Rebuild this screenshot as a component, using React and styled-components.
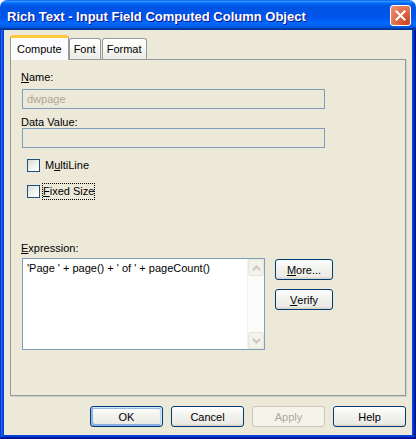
import React from 'react';
import styled, { createGlobalStyle, css } from 'styled-components';

const GlobalStyle = createGlobalStyle`
  html, body {
    margin: 0;
    padding: 0;
    background: #ffffff;
    overflow: hidden;
  }
  body {
    font-family: "Liberation Sans", Arial, sans-serif;
    font-size: 11px;
    color: #000;
  }
`;

// Window chrome
const Window = styled.div`
  width: 416px;
  height: 439px;
  display: flex;
  flex-direction: column;
`;

const TitleBar = styled.div`
  height: 30px;
  flex-shrink: 0;
  display: flex;
  align-items: flex-start;
  justify-content: space-between;
  padding: 0 5px 0 7px;
  box-sizing: border-box;
  border-radius: 7px 7px 0 0;
  background: linear-gradient(
    180deg,
    #0058ee 0%,
    #3593ff 4%,
    #288eff 6%,
    #127dff 8%,
    #036ffc 10%,
    #0262ee 14%,
    #0057e5 20%,
    #0054e3 24%,
    #0055eb 56%,
    #005bf5 66%,
    #026afe 76%,
    #0062ef 86%,
    #0052d6 92%,
    #0040ab 94%,
    #003092 100%
  );
`;

const Title = styled.div`
  padding-top: 9px;
  font-family: "Liberation Sans", Arial, sans-serif;
  font-weight: bold;
  font-size: 13px;
  line-height: 16px;
  color: #fff;
  text-shadow: 1px 1px #0f1089;
  white-space: nowrap;
`;

const CloseButton = styled.div`
  margin-top: 5px;
  width: 21px;
  height: 21px;
  box-sizing: border-box;
  border: 1px solid #fff;
  border-radius: 3px;
  background: radial-gradient(circle at 85% 85%, #cc4622 0%, #dc5a36 30%, #e37452 60%, #ee9478 100%);
  display: flex;
  align-items: center;
  justify-content: center;
`;

const Frame = styled.div`
  flex: 1;
  display: flex;
  padding: 0 4px 4px 4px;
  background: #0842d6;
  box-shadow: inset -1px -1px #00138c, inset 1px 0 #0831d9, inset -2px -2px #001ea0,
    inset 2px 0 #166aee, inset -3px -3px #003bda, inset 3px 0 #0855dd;
`;

const Client = styled.div`
  flex: 1;
  display: flex;
  flex-direction: column;
  padding: 6px 6px 0 6px;
  background: #ece9d8;
`;

// Tabs
const TabStrip = styled.div`
  display: flex;
  align-items: flex-end;
  height: 24px;
  position: relative;
  z-index: 1;
  margin-bottom: -1px;
`;

const Tab = styled.div`
  box-sizing: border-box;
  border: 1px solid #919b9c;
  border-bottom: none;
  border-radius: 3px 3px 0 0;
  line-height: 18px;
  white-space: nowrap;
  ${(p) =>
    p.$active
      ? css`
          height: 25px;
          padding: 2px 6px 0 6px;
          background: #fcfcfe;
          border-top: 3px solid #ffc83c;
          box-shadow: inset 0 -0px #fff;
        `
      : css`
          height: 21px;
          padding: 1px 4px 0 4px;
          margin-bottom: 1px;
          margin-left: ${p.$gap || 0}px;
          background: linear-gradient(180deg, #ffffff 0%, #f6f6f2 50%, #ecebe5 100%);
        `}
`;

const Panel = styled.div`
  height: 337px;
  box-sizing: border-box;
  border: 1px solid #919b9c;
  box-shadow: 1px 1px 0 #d0cebf;
  background: #ece9d8;
  padding: 11px 0 0 10px;
  display: flex;
  flex-direction: column;
`;

const FieldLabel = styled.div`
  line-height: 12px;
  height: 12px;
  margin-top: ${(p) => p.$mt || 0}px;
  white-space: nowrap;
`;

const TextBox = styled.div`
  margin: ${(p) => p.$mt || 0}px 0 0 1px;
  width: 303px;
  height: 20px;
  box-sizing: border-box;
  border: 1px solid #7f9db9;
  background: #ece9d8;
  padding: 0 4px;
  line-height: 18px;
  color: #aca899;
`;

const CheckRow = styled.div`
  display: flex;
  align-items: center;
  height: 13px;
  margin: ${(p) => p.$mt || 0}px 0 0 6px;
`;

const CheckBox = styled.div`
  width: 13px;
  height: 13px;
  box-sizing: border-box;
  border: 1px solid #1c5180;
  background: linear-gradient(135deg, #dcdcd7 0%, #f4f4f1 60%, #ffffff 100%);
  flex-shrink: 0;
`;

const CheckText = styled.div`
  margin-left: ${(p) => (p.$focus ? 2 : 3)}px;
  line-height: 15px;
  padding: 0 ${(p) => (p.$focus ? 0 : 1)}px;
  border: 1px dotted ${(p) => (p.$focus ? '#000' : 'transparent')};
  white-space: nowrap;
`;

const ExpressionRow = styled.div`
  display: flex;
  margin-top: 4px;
  margin-left: 1px;
`;

const ExpressionBox = styled.div`
  width: 243px;
  height: 92px;
  box-sizing: border-box;
  border: 1px solid #7f9db9;
  background: #fff;
  display: flex;
`;

const ExpressionText = styled.div`
  flex: 1;
  padding: 3px 4px;
  line-height: 13px;
  white-space: nowrap;
`;

const ScrollBar = styled.div`
  width: 16px;
  display: flex;
  flex-direction: column;
  justify-content: space-between;
  background: #fbfbf9;
  border-left: 1px solid #f4f3ee;
`;

const ScrollArrow = styled.div`
  height: 17px;
  box-sizing: border-box;
  border: 1px solid #e8e6dc;
  border-radius: 2px;
  background: #f2f1ea;
  display: flex;
  align-items: center;
  justify-content: center;
`;

const SideButtons = styled.div`
  display: flex;
  flex-direction: column;
  gap: 9px;
  margin: 1px 0 0 10px;
`;

const Button = styled.div`
  width: ${(p) => p.$w || 73}px;
  height: 21px;
  box-sizing: border-box;
  border: 1px solid #003c74;
  border-radius: 3px;
  background: linear-gradient(180deg, #ffffff 0%, #f3f3ef 40%, #ecebe6 86%, #d6d0c5 100%);
  display: flex;
  align-items: center;
  justify-content: center;
  line-height: 13px;
  padding-top: 1px;
  white-space: nowrap;
  ${(p) =>
    p.$default &&
    css`
      box-shadow: inset -1px 1px #cee7ff, inset 1px 2px #98b8ea, inset -2px 2px #bcd4f6,
        inset 1px -1px #89ade4, inset 2px -2px #89ade4;
    `}
  ${(p) =>
    p.$disabled &&
    css`
      border-color: #c9c7ba;
      background: #f5f4ea;
      color: #aca899;
    `}
`;

const ButtonRow = styled.div`
  display: flex;
  justify-content: flex-end;
  gap: 8px;
  margin-top: 10px;
`;

const Arrow = ({ up }) => (
  <svg width="9" height="6" viewBox="0 0 9 6">
    <path
      d={up ? 'M1 5 L4.5 1.5 L8 5' : 'M1 1 L4.5 4.5 L8 1'}
      fill="none"
      stroke="#c9c7ba"
      strokeWidth="2"
    />
  </svg>
);

const CloseIcon = () => (
  <svg width="11" height="11" viewBox="0 0 11 11">
    <path d="M1.5 1.5 L9.5 9.5 M9.5 1.5 L1.5 9.5" stroke="#fff" strokeWidth="2.2" strokeLinecap="square" />
  </svg>
);

const App = () => {
  return (
    <>
      <GlobalStyle />
      <Window>
        <TitleBar>
          <Title>Rich Text - Input Field Computed Column Object</Title>
          <CloseButton>
            <CloseIcon />
          </CloseButton>
        </TitleBar>
        <Frame>
          <Client>
            <TabStrip>
              <Tab $active>Compute</Tab>
              <Tab>Font</Tab>
              <Tab $gap={1}>Format</Tab>
            </TabStrip>
            <Panel>
              <FieldLabel>
                <u>N</u>ame:
              </FieldLabel>
              <TextBox $mt={6}>dwpage</TextBox>
              <FieldLabel $mt={7}>Data Value:</FieldLabel>
              <TextBox />
              <CheckRow $mt={11}>
                <CheckBox />
                <CheckText>
                  M<u>u</u>ltiLine
                </CheckText>
              </CheckRow>
              <CheckRow $mt={13}>
                <CheckBox />
                <CheckText $focus>
                  <u>F</u>ixed Size
                </CheckText>
              </CheckRow>
              <FieldLabel $mt={44}>
                <u>E</u>xpression:
              </FieldLabel>
              <ExpressionRow>
                <ExpressionBox>
                  <ExpressionText>'Page ' + page() + ' of ' + pageCount()</ExpressionText>
                  <ScrollBar>
                    <ScrollArrow>
                      <Arrow up />
                    </ScrollArrow>
                    <ScrollArrow>
                      <Arrow />
                    </ScrollArrow>
                  </ScrollBar>
                </ExpressionBox>
                <SideButtons>
                  <Button $w={58}>
                    <u>M</u>ore...
                  </Button>
                  <Button $w={58}>
                    <u>V</u>erify
                  </Button>
                </SideButtons>
              </ExpressionRow>
            </Panel>
            <ButtonRow>
              <Button $default>OK</Button>
              <Button>Cancel</Button>
              <Button $disabled>Apply</Button>
              <Button>Help</Button>
            </ButtonRow>
          </Client>
        </Frame>
      </Window>
    </>
  );
};

export default App;
